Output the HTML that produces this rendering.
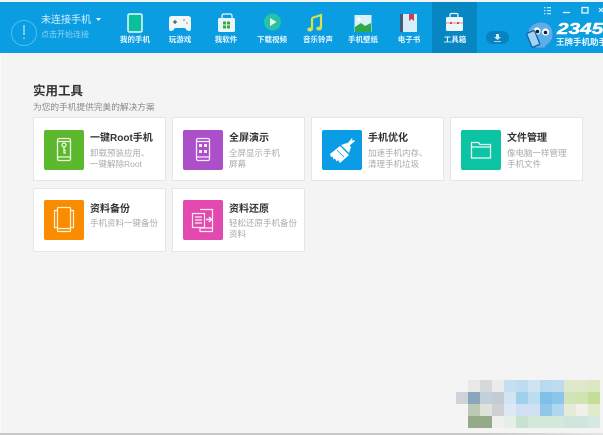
<!DOCTYPE html>
<html lang="zh"><head><meta charset="utf-8"><style>
*{box-sizing:border-box;margin:0;padding:0}
html,body{width:603px;height:435px;overflow:hidden;background:#f4f4f4}
body{position:relative;font-family:"Liberation Sans","Noto Sans CJK SC",sans-serif}
.a{position:absolute}
#hd{left:0;top:2px;width:603px;height:51px;background:#0a9de2}
.nav{position:absolute;top:34px;width:46px;text-align:center;font-size:7.5px;line-height:11px;font-weight:bold;color:#e6f5fd;white-space:nowrap}
.card{position:absolute;width:133px;height:64px;background:#fff;border:1px solid #e6e6e6}
.ic{position:absolute;left:10px;top:12px;width:40px;height:40px;border-radius:2px}
.r2 .ic{top:11px}
.ic svg{display:block}
.t{position:absolute;left:56px;top:14px;font-size:10px;line-height:14px;font-weight:bold;color:#333;white-space:nowrap}
.r2 .t{top:14px}
.d{position:absolute;left:56px;top:30px;font-size:8.5px;line-height:11px;color:#aaa;white-space:nowrap}
.r2 .d{top:29px}
.m{position:absolute;width:12px;height:12px}
</style></head><body>
<div class="a" id="hd"></div>
<svg class="a" style="left:0;top:0" width="603" height="53" fill="none">
<circle cx="24" cy="33" r="12.500" stroke="#4fbdee" stroke-width="1"/>
<path d="M24 25v10M24 37.500v1.500" stroke="#bfe6f8" stroke-width="1.200"/>
<path d="M96 18h5l-2.500 3z" fill="#fff"/>
<rect x="128" y="14" width="14" height="18" rx="1.500" fill="#08c19a" stroke="#e8f8fc" stroke-width="1.500"/>
<path d="M172 16h16q3 0 3 3v10q0 2-2 2-2 0-4-3h-10q-2 3-4 3-2 0-2-2V19q0-3 3-3z" fill="#eef8fd"/>
<path d="M175 20v4M173 22h4" stroke="#555" stroke-width="1.200"/><circle cx="184" cy="20" r="1" fill="#e88"/><circle cx="187" cy="23" r="1" fill="#ddc050"/>
<path d="M222 19v-3q0-2 2-2h6q2 0 2 2v3" stroke="#eef8fd" stroke-width="1.200"/>
<rect x="218" y="18" width="17" height="14" rx="1.500" fill="#e8f6fc"/>
<path d="M223 21.500h3v3h-3zM227 21.500h3v3h-3zM223 25.500h3v3h-3zM227 25.500h3v3h-3z" fill="#35a83c"/>
<circle cx="272.500" cy="22" r="8.500" fill="#27c3a3"/><path d="M270 18l6.500 4-6.500 4z" fill="#eafaf6"/>
<path d="M312 18l9-3v13" stroke="#d8e04a" stroke-width="2.200"/><path d="M312 18v11" stroke="#d8e04a" stroke-width="2.200"/><ellipse cx="310" cy="29.500" rx="2.800" ry="2" fill="#d8e04a"/><ellipse cx="319" cy="28.500" rx="2.800" ry="2" fill="#d8e04a"/>
<rect x="354.500" y="15" width="17" height="17" fill="#d8f0f8"/><path d="M355 32v-5l6-4 4 3 6-3v9z" fill="#2fa84a"/><circle cx="359" cy="19.500" r="1.800" fill="#fff"/>
<rect x="400" y="14" width="3" height="18" fill="#445a78"/><rect x="403" y="14" width="14" height="18" fill="#d5eefa"/><path d="M409 14h5v7l-2.500-2-2.500 2z" fill="#d83a4a"/>
<rect x="432" y="2" width="45" height="51" fill="#0786c4"/>
<path d="M450 17v-2q0-1.500 1.500-1.500h5q1.500 0 1.500 1.500v2" stroke="#eef8fd" stroke-width="1.200"/>
<rect x="446" y="17" width="17" height="14" rx="1.500" fill="#eaf7fd"/><path d="M446 23h17" stroke="#e88" stroke-width="1"/><path d="M450 22h2v2h-2zM457 22h2v2h-2z" fill="#d84a4a"/>
<rect x="486" y="31" width="23" height="13" rx="6.500" fill="#0a82bf"/>
<path d="M496 34h3v3h2l-3.500 3-3.500-3h2zM494 41h7v.8h-7z" fill="#cfe9f7"/>
<path d="M544 7h1.500v1.200H544zM544 10h1.500v1.200H544zM544 13h1.500v1.200H544zM547 7h4v1.200h-4zM547 10h4v1.200h-4zM547 13h4v1.200h-4z" fill="#bfe6f8"/>
<path d="M563 12.500h7" stroke="#e6f6fd" stroke-width="1.300"/>
<rect x="582" y="7.500" width="6" height="5.500" stroke="#e6f6fd" stroke-width="1.300"/>
<path d="M599 8l4 4M603 8l-4 4" stroke="#e6f6fd" stroke-width="1.200"/>
<path d="M541 22c8 0 12 6 12 12 0 7-4 10-7 12l-1 2h-9l-2-4c-4-3-6-7-6-11 0-6 6-11 13-11z" fill="#5aaeea" stroke="#2f86d2" stroke-width=".8"/>
<circle cx="537" cy="31" r="3.600" fill="#fff"/><circle cx="545.500" cy="32" r="3.600" fill="#fff"/><circle cx="537.500" cy="31.500" r="1.800" fill="#123"/><circle cx="545.500" cy="32.500" r="1.800" fill="#123"/>
<rect x="-4" y="-7.500" width="8.500" height="15" rx="1" transform="translate(533 39) rotate(-22)" fill="#9fd4f5" stroke="#1a5fa8" stroke-width="1.300"/>
</svg>
<div class="a" style="left:41px;top:14px;font-size:10px;line-height:14px;color:#d8f1fc;white-space:nowrap">未连接手机</div>
<div class="a" style="left:41px;top:29px;font-size:8px;line-height:12px;color:#8ed3f3;white-space:nowrap">点击开始连接</div>
<div class="nav" style="left:112px">我的手机</div>
<div class="nav" style="left:157px">玩游戏</div>
<div class="nav" style="left:203px">我软件</div>
<div class="nav" style="left:249px">下载视频</div>
<div class="nav" style="left:295px">音乐铃声</div>
<div class="nav" style="left:340px">手机壁纸</div>
<div class="nav" style="left:386px">电子书</div>
<div class="nav" style="left:432px">工具箱</div>
<div class="a" style="left:557px;top:21px;font-size:16px;line-height:18px;font-weight:bold;font-style:italic;color:#fff;white-space:nowrap;transform:scaleX(1.3);transform-origin:0 0;-webkit-text-stroke:.4px #fff">2345</div>
<div class="a" style="left:556px;top:37px;font-size:8.500px;line-height:11px;font-weight:bold;color:#e8f7fe;white-space:nowrap">王牌手机助手</div>

<div class="a" style="left:33px;top:82px;font-size:12.500px;line-height:18px;font-weight:bold;color:#333;white-space:nowrap">实用工具</div>
<div class="a" style="left:33px;top:102px;font-size:8.700px;line-height:11px;color:#888;white-space:nowrap">为您的手机提供完美的解决方案</div>

<div class="card" style="left:33px;top:117px"><div class="ic" style="background:#5cb82c"><svg width="40" height="40" fill="none" stroke="#eef9e6" stroke-width="1.300"><rect x="13.500" y="8.500" width="13" height="22" rx="1.500"/><path d="M14 27h12M14 11.500h12"/><circle cx="20" cy="15" r="2"/><path d="M20 17v6h2M20 20.500h2"/></svg></div><div class="t">一键Root手机</div><div class="d">卸载预装应用、<br>一键解除Root</div></div>
<div class="card" style="left:172px;top:117px"><div class="ic" style="background:#ab50c9"><svg width="40" height="40" fill="none" stroke="#f8ecfb" stroke-width="1.300"><rect x="13.500" y="8.500" width="13" height="22" rx="1.500"/><path d="M14 27h12M14 11.500h12"/><path d="M16 14h3v3h-3zM21 14h3v3h-3zM16 20h3v3h-3zM21 20h3v3h-3z" fill="#f8ecfb" stroke="none"/></svg></div><div class="t">全屏演示</div><div class="d">全屏显示手机<br>屏幕</div></div>
<div class="card" style="left:311px;top:117px"><div class="ic" style="background:#0a9de6"><svg width="40" height="40"><path d="M8 24l10-8 9 9-9 8-2-3-1.500 1.500-1.500-3-1.500 1-1-3-1.500 .5z" fill="#fff"/><path d="M19 15l6-2 4 4-2 6z" fill="#fff"/><path d="M25 14l5-6 3 3-6 5z" fill="#fff"/><circle cx="31" cy="9.500" r="1" fill="#0a9de6"/><path d="M15 20l7 7" stroke="#0a9de6" stroke-width=".8"/></svg></div><div class="t">手机优化</div><div class="d">加速手机内存、<br>清理手机垃圾</div></div>
<div class="card" style="left:450px;top:117px"><div class="ic" style="background:#0cc3a4"><svg width="40" height="40" fill="none" stroke="#e4fbf6" stroke-width="1.300"><path d="M10.500 12.500h7l1.500 2h10.500v13.500h-19zM10.500 17h19"/></svg></div><div class="t">文件管理</div><div class="d">像电脑一样管理<br>手机文件</div></div>
<div class="card r2" style="left:33px;top:188px"><div class="ic" style="background:#f98c00"><svg width="40" height="40" fill="none" stroke="#ffeed8" stroke-width="1.200"><rect x="13.500" y="7.500" width="13" height="24" rx="1"/><path d="M13.500 10.500H10.500v17h3M26.500 10.500h3v17h-3M14 28.500h12" /></svg></div><div class="t">资料备份</div><div class="d">手机资料一键备份</div></div>
<div class="card r2" style="left:172px;top:188px"><div class="ic" style="background:#e34ab0"><svg width="40" height="40" fill="none" stroke="#fcecf7" stroke-width="1.200"><path d="M17 9.500h12.500v22H17v-4M17 28h12"/><rect x="9.500" y="13.500" width="12" height="14" fill="#e34ab0"/><path d="M12 17h7M12 20h7M12 23h7"/><path d="M23 19.500h5M26 17l2.500 2.500-2.500 2.500" stroke-width="1.500"/></svg></div><div class="t">资料还原</div><div class="d">轻松还原手机备份<br>资料</div></div>

<div class="m" style="left:468px;top:380px;background:#e8e8e8"></div><div class="m" style="left:480px;top:380px;background:#d8d8d8"></div><div class="m" style="left:492px;top:380px;background:#ececec"></div><div class="m" style="left:504px;top:380px;background:#c5def0"></div><div class="m" style="left:516px;top:380px;background:#c0dcf0"></div><div class="m" style="left:528px;top:380px;background:#cfe3f0"></div><div class="m" style="left:540px;top:380px;background:#b8daf0"></div><div class="m" style="left:552px;top:380px;background:#bddcf0"></div><div class="m" style="left:564px;top:380px;background:#e0e8cc"></div><div class="m" style="left:576px;top:380px;background:#e0e8cc"></div><div class="m" style="left:588px;top:380px;background:#dce8c0"></div>
<div class="m" style="left:456px;top:392px;background:#cdd3d8"></div><div class="m" style="left:468px;top:392px;background:#8aa5bc"></div><div class="m" style="left:480px;top:392px;background:#c0d0dc"></div><div class="m" style="left:492px;top:392px;background:#c5cbd2"></div><div class="m" style="left:504px;top:392px;background:#d2e5f2"></div><div class="m" style="left:516px;top:392px;background:#9fd0ec"></div><div class="m" style="left:528px;top:392px;background:#bcdcf0"></div><div class="m" style="left:540px;top:392px;background:#80c0e8"></div><div class="m" style="left:552px;top:392px;background:#8cc6ea"></div><div class="m" style="left:564px;top:392px;background:#d2e4b8"></div><div class="m" style="left:576px;top:392px;background:#cfe4b0"></div><div class="m" style="left:588px;top:392px;background:#c4de98"></div>
<div class="m" style="left:468px;top:404px;background:#bccab4"></div><div class="m" style="left:480px;top:404px;background:#e0e4d8"></div><div class="m" style="left:492px;top:404px;background:#ced0d4"></div><div class="m" style="left:504px;top:404px;background:#dce8f2"></div><div class="m" style="left:516px;top:404px;background:#cfe0f2"></div><div class="m" style="left:528px;top:404px;background:#cfe0f2"></div><div class="m" style="left:540px;top:404px;background:#90c8ea"></div><div class="m" style="left:552px;top:404px;background:#b0d6f0"></div><div class="m" style="left:564px;top:404px;background:#e4ecd8"></div><div class="m" style="left:576px;top:404px;background:#eff1ea"></div><div class="m" style="left:588px;top:404px;background:#e0ebcc"></div>
<div class="m" style="left:468px;top:416px;background:#93ab88"></div><div class="m" style="left:480px;top:416px;background:#93ab88"></div><div class="m" style="left:492px;top:416px;background:#f0f0f0"></div><div class="m" style="left:504px;top:416px;background:#e4efe8"></div><div class="m" style="left:516px;top:416px;background:#c8e2cf"></div><div class="m" style="left:528px;top:416px;background:#d4e8dc"></div><div class="m" style="left:540px;top:416px;background:#d4e8dc"></div><div class="m" style="left:552px;top:416px;background:#d4e8dc"></div><div class="m" style="left:564px;top:416px;background:#cfe6dc"></div><div class="m" style="left:576px;top:416px;background:#cfe6dc"></div><div class="m" style="left:588px;top:416px;background:#d6e8e2"></div>
<div class="a" style="left:0;top:433px;width:603px;height:2px;background:linear-gradient(90deg,#c8c8c8,#c8c8c8 80%,#e4e4e4)"></div>
<div class="a" style="left:0;top:53px;width:1px;height:380px;background:#fafafa"></div>
</body></html>
